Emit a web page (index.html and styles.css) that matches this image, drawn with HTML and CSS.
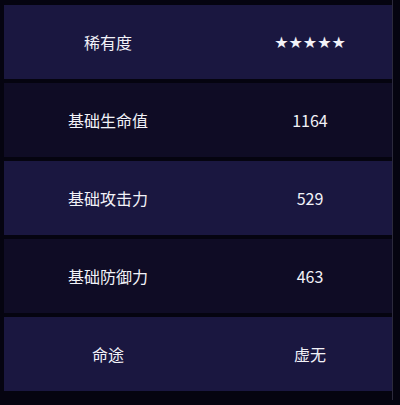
FILE: index.html
```html
<!DOCTYPE html>
<html lang="zh">
<head>
<meta charset="utf-8">
<link rel="stylesheet" href="styles.css">
</head>
<body>
<div class="table">
  <div class="row light"><div class="cell key">稀有度</div><div class="cell val stars">★★★★★</div></div>
  <div class="row dark"><div class="cell key">基础生命值</div><div class="cell val">1164</div></div>
  <div class="row light"><div class="cell key">基础攻击力</div><div class="cell val">529</div></div>
  <div class="row dark"><div class="cell key">基础防御力</div><div class="cell val">463</div></div>
  <div class="row light"><div class="cell key">命途</div><div class="cell val">虚无</div></div>
</div>
</body>
</html>
```
FILE: styles.css
```css
html, body {
  margin: 0;
  padding: 0;
  background: #050410;
  width: 400px;
  height: 405px;
  overflow: hidden;
}
.table {
  display: flex;
  flex-direction: column;
  gap: 4px;
  padding: 5px 0 0 4px;
  width: 393px;
  border-right: 1px solid #2c2a3c;
  height: 400px;
  box-sizing: border-box;
}
.row {
  display: grid;
  grid-template-columns: 208px 1fr;
  height: 74px;
  align-items: center;
}
.light { background: #1a1740; }
.dark { background: #0f0c25; }
.cell {
  font-family: "Noto Sans CJK SC", "DejaVu Sans", sans-serif;
  font-size: 16px;
  color: #f2f2f8;
  text-align: center;
}
.val { padding-left: 16px; }
.stars {
  font-family: "DejaVu Sans", sans-serif;
  font-size: 16px;
}
```
